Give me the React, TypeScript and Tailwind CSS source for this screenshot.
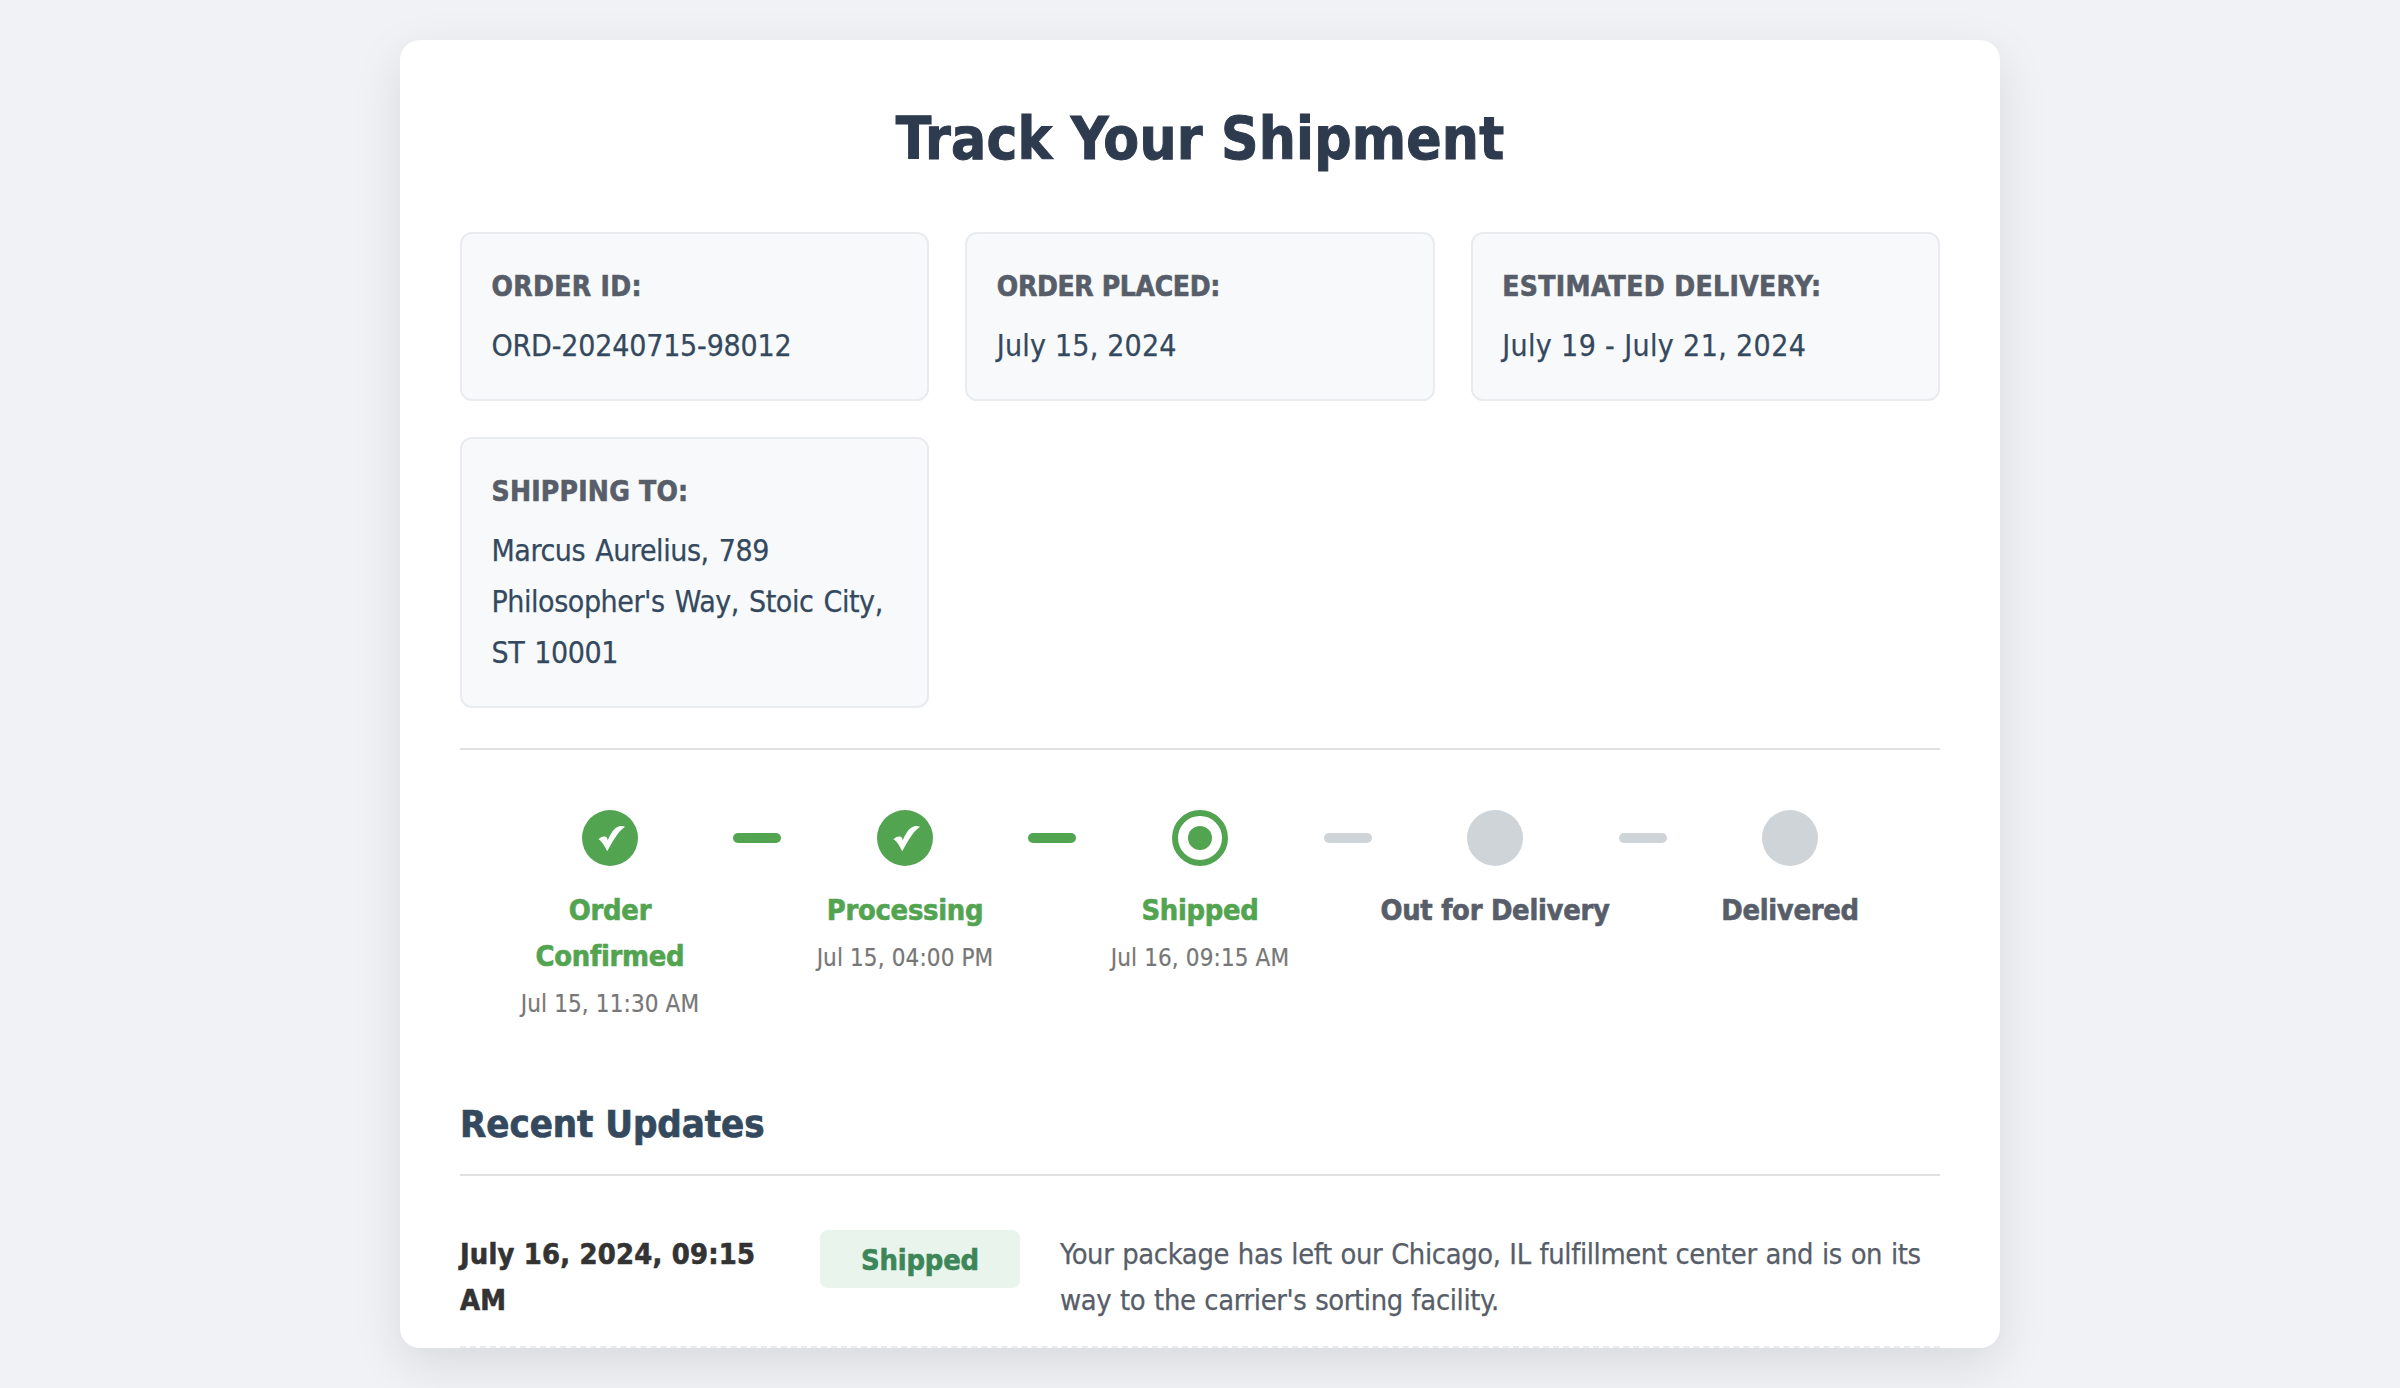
type StepState = 'done' | 'current' | 'pending';

const details = [
  { label: 'ORDER ID:', labelCls: 'tracking-[0.32px]', value: 'ORD-20240715-98012', valueCls: 'tracking-[-0.19px]' },
  { label: 'ORDER PLACED:', labelCls: 'tracking-[-0.36px]', value: 'July 15, 2024', valueCls: 'tracking-[0.2px]' },
  { label: 'ESTIMATED DELIVERY:', labelCls: 'tracking-[0.36px]', value: 'July 19 - July 21, 2024', valueCls: 'tracking-[0.37px]' },
  { label: 'SHIPPING TO:', labelCls: 'tracking-[0.24px]', value: "Marcus Aurelius, 789 Philosopher's Way, Stoic City, ST 10001", valueCls: 'tracking-[-0.44px] [word-spacing:2px]' },
];

const steps: { label: string; time?: string; state: StepState }[] = [
  { label: 'Order Confirmed', time: 'Jul 15, 11:30 AM', state: 'done' },
  { label: 'Processing', time: 'Jul 15, 04:00 PM', state: 'done' },
  { label: 'Shipped', time: 'Jul 16, 09:15 AM', state: 'current' },
  { label: 'Out for Delivery', state: 'pending' },
  { label: 'Delivered', state: 'pending' },
];

function Marker({ state }: { state: StepState }) {
  if (state === 'done') {
    return (
      <div className="flex size-14 items-center justify-center rounded-full bg-[#53a451]">
        <svg width="56" height="56" viewBox="0 0 56 56" fill="#fff">
          <path d="M16.500 29.300 C18.500 26.700 21.800 25.800 23.800 26.800 C24.900 27.500 25.300 28.700 25.700 30.200 C28 25 30.500 20.500 33.500 18.200 C36.500 15.900 40.500 15.600 43 16.700 C38 20 33 26.500 25.200 41.300 C23 37 20.500 31.500 16.500 29.300 Z" />
        </svg>
      </div>
    );
  }
  if (state === 'current') {
    return (
      <div className="flex size-14 items-center justify-center rounded-full border-6 border-[#53a451] bg-white">
        <div className="size-6 rounded-full bg-[#53a451]" />
      </div>
    );
  }
  return <div className="size-14 rounded-full bg-[#ced4d8]" />;
}

function Step({ label, time, state }: (typeof steps)[number]) {
  return (
    <div className="flex w-60 flex-col items-center px-4 text-center">
      <Marker state={state} />
      <div
        className={`mt-[21px] text-[28.8px] leading-[46px] font-bold tracking-[-0.28px] [-webkit-text-stroke:0.6px] ${
          state === 'pending' ? 'text-[#575e69]' : 'text-[#53a451]'
        } ${label.length > 15 ? '-mx-4 whitespace-nowrap' : ''}`}
      >
        {label}
      </div>
      {time && (
        <div className="mt-[5.5px] text-[24px] leading-[38.4px] tracking-[0.12px] whitespace-nowrap text-[#777] [-webkit-text-stroke:0.2px]">
          {time}
        </div>
      )}
    </div>
  );
}

export default function App() {
  return (
    <div className="h-[1388px] overflow-hidden bg-[#f0f2f6] pt-10 font-['DejaVu_Sans_Condensed','DejaVu_Sans',sans-serif]">
      <main className="mx-auto h-[1308px] w-[1600px] overflow-hidden rounded-[20px] bg-white px-[60px] pt-16 shadow-[0_16px_50px_rgba(0,0,0,0.1)]">
        <h1 className="text-center text-[58px] leading-[70px] font-bold tracking-[0.18px] text-[#2e3b4e] [-webkit-text-stroke:1px]">
          Track Your Shipment
        </h1>

        <section className="mt-[58px] grid grid-cols-3 gap-9 border-b-2 border-[#dfe1e3] pb-10">
          {details.map((d) => (
            <div key={d.label} className="rounded-xl border-2 border-[#e9ebee] bg-[#f8f9fb] px-[29.5px] pt-[33px] pb-7">
              <div className={`mb-[13px] text-[28px] leading-10 font-bold text-[#575e69] [-webkit-text-stroke:0.6px] ${d.labelCls}`}>
                {d.label}
              </div>
              <div className={`text-[30px] leading-[51px] text-[#34495e] [-webkit-text-stroke:0.25px] ${d.valueCls}`}>{d.value}</div>
            </div>
          ))}
        </section>

        <section className="flex items-start justify-between px-[30px] pt-[60px]">
          {steps.map((s, i) => (
            <div key={s.label} className="contents">
              {i > 0 && (
                <div
                  className={`mt-[23px] h-2.5 w-12 rounded-full ${
                    i < 3 ? '-mr-[23.5px] -ml-[24.5px] bg-[#53a451]' : '-mr-[24.5px] -ml-[23.5px] bg-[#ced4d8]'
                  }`}
                />
              )}
              <Step {...s} />
            </div>
          ))}
        </section>

        <section className="mt-[78px]">
          <h2 className="border-b-2 border-[#dfe1e3] pb-[27px] text-[38px] leading-[46px] font-bold tracking-[-0.05px] text-[#34495e] [-webkit-text-stroke:0.7px]">
            Recent Updates
          </h2>
          <div className="mt-[54px] grid grid-cols-[320px_200px_1fr] items-start gap-x-10 border-b-2 border-dashed border-[#e9ebee] pb-[23px]">
            <div className="pt-px text-[28.8px] leading-[46px] font-bold tracking-[0.2px] text-[#333] [-webkit-text-stroke:0.6px]">
              July 16, 2024, 09:15 AM
            </div>
            <div className="rounded-lg bg-[#e9f4ec] pt-[7px] pb-[5px] text-center text-[28.8px] leading-[46px] font-bold tracking-[-0.2px] text-[#3c8659] [-webkit-text-stroke:0.6px]">
              Shipped
            </div>
            <div className="pt-px text-[28.8px] leading-[46px] tracking-[-0.36px] text-[#575e69] [-webkit-text-stroke:0.25px] [word-spacing:0.9px]">
              Your package has left our Chicago, IL fulfillment center and is on its way to the carrier's sorting facility.
            </div>
          </div>
        </section>
      </main>
    </div>
  );
}
